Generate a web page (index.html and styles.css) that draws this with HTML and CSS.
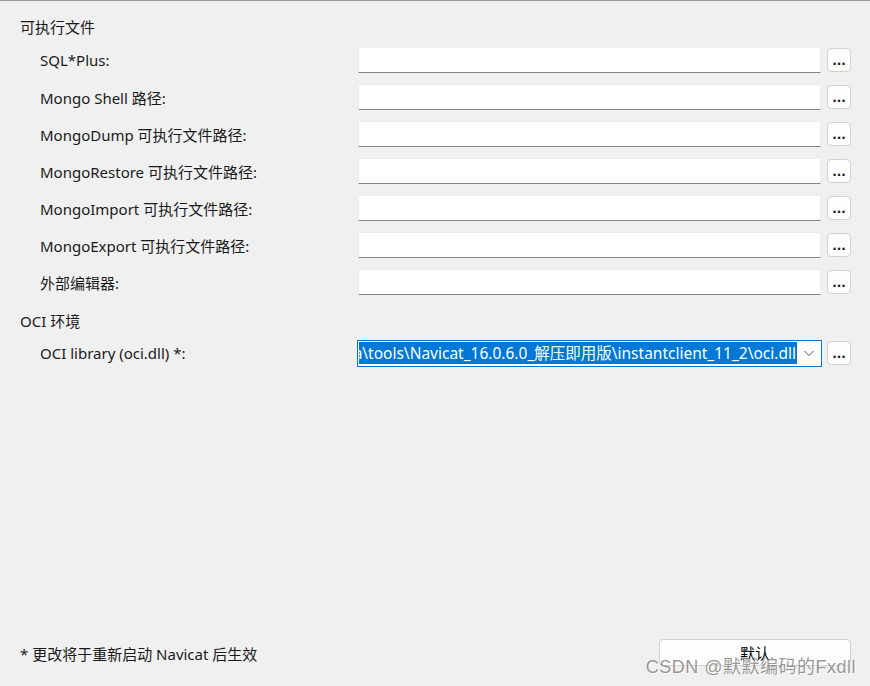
FILE: index.html
```html
<!DOCTYPE html>
<html lang="zh-CN">
<head>
    <meta charset="UTF-8">
    <title>选项</title>
    <link rel="stylesheet" href="styles.css">
</head>
<body>
    <div class="page">
        <div class="section-title">可执行文件</div>

        <div class="row">
            <label class="row-label">SQL*Plus:</label>
            <div class="field"></div>
            <button class="browse-btn">...</button>
        </div>
        <div class="row">
            <label class="row-label">Mongo Shell 路径:</label>
            <div class="field"></div>
            <button class="browse-btn">...</button>
        </div>
        <div class="row">
            <label class="row-label">MongoDump 可执行文件路径:</label>
            <div class="field"></div>
            <button class="browse-btn">...</button>
        </div>
        <div class="row">
            <label class="row-label">MongoRestore 可执行文件路径:</label>
            <div class="field"></div>
            <button class="browse-btn">...</button>
        </div>
        <div class="row">
            <label class="row-label">MongoImport 可执行文件路径:</label>
            <div class="field"></div>
            <button class="browse-btn">...</button>
        </div>
        <div class="row">
            <label class="row-label">MongoExport 可执行文件路径:</label>
            <div class="field"></div>
            <button class="browse-btn">...</button>
        </div>
        <div class="row">
            <label class="row-label">外部编辑器:</label>
            <div class="field"></div>
            <button class="browse-btn">...</button>
        </div>

        <div class="section-title oci-title">OCI 环境</div>

        <div class="row">
            <label class="row-label">OCI library (oci.dll) *:</label>
            <div class="field combo">
                <div class="combo-text"><span class="selected">D:\Java\tools\Navicat_16.0.6.0_解压即用版\instantclient_11_2\oci.dll</span></div>
                <svg class="combo-arrow" width="12" height="8" viewBox="0 0 12 8">
                    <path d="M1.5 2 L6 6.5 L10.5 2" fill="none" stroke="#555" stroke-width="1"/>
                </svg>
            </div>
            <button class="browse-btn">...</button>
        </div>

        <div class="spacer"></div>

        <div class="footer">
            <div class="note">* 更改将于重新启动 Navicat 后生效</div>
            <button class="default-btn">默认</button>
        </div>
    </div>

    <div class="watermark">CSDN @默默编码的Fxdll</div>
</body>
</html>
```

FILE: styles.css
```css
html, body {
    margin: 0;
    height: 100%;
}

body {
    background: #f0f0f0;
    border-top: 1px solid #9a9a9a;
    box-sizing: border-box;
    font-family: "Noto Sans", "Noto Sans CJK SC", sans-serif;
    font-size: 15px;
    color: #1a1a1a;
    overflow: hidden;
    position: relative;
}

.page {
    display: flex;
    flex-direction: column;
    height: 100%;
    padding: 15px 19px 20px 20px;
    box-sizing: border-box;
}

.section-title {
    height: 22px;
    line-height: 22px;
    margin-bottom: 9px;
}

.oci-title {
    margin-top: 4px;
    margin-bottom: 8px;
}

.row {
    display: flex;
    align-items: center;
    height: 26px;
    margin-bottom: 11px;
}

.row-label {
    flex: none;
    width: 318px;
    padding-left: 20px;
    white-space: nowrap;
}

.field {
    flex: none;
    box-sizing: border-box;
    width: 463px;
    height: 26px;
    background: #fff;
    border: 1px solid #ececec;
    border-bottom: 1px solid #868686;
    border-radius: 2px 2px 0 0;
}

.combo {
    display: flex;
    align-items: center;
    width: 465px;
    height: 27px;
    margin-left: -1px;
    border: 1px solid #0078d7;
    border-radius: 0;
    padding: 0 1px;
}

.combo-text {
    flex: 1;
    overflow: hidden;
    display: flex;
    justify-content: flex-end;
    white-space: nowrap;
    margin-right: 6px;
    font-size: 15.5px;
}

.selected {
    background: #0078d7;
    color: #fff;
    line-height: 22px;
    padding-right: 1px;
}

.combo-arrow {
    margin-right: 5px;
}

.browse-btn {
    flex: none;
    width: 24px;
    height: 24px;
    margin-left: 6px;
    padding: 2px 0 0;
    background: #fdfdfd;
    border: 1px solid #d2d2d2;
    border-radius: 4px;
    font-family: "DejaVu Sans", sans-serif;
    font-size: 12px;
    font-weight: bold;
    letter-spacing: 0;
    color: #1a1a1a;
    line-height: 1;
}

.combo + .browse-btn {
    margin-left: 5px;
}

.spacer {
    flex: 1;
}

.footer {
    display: flex;
    align-items: center;
    justify-content: space-between;
}

.note {
    padding-top: 1px;
}

.default-btn {
    width: 192px;
    height: 27px;
    background: #fdfdfd;
    border: 1px solid #d0d0d0;
    border-radius: 4px;
    font-family: "Noto Sans CJK SC", sans-serif;
    font-size: 15px;
    color: #000;
}

.watermark {
    position: absolute;
    right: 14px;
    bottom: 8px;
    font-family: "Liberation Sans", "Noto Sans CJK SC", sans-serif;
    font-size: 18px;
    letter-spacing: 0.5px;
    color: rgba(120, 120, 120, 0.75);
    text-shadow: 1px 1px 0 rgba(255, 255, 255, 0.8);
}
```
